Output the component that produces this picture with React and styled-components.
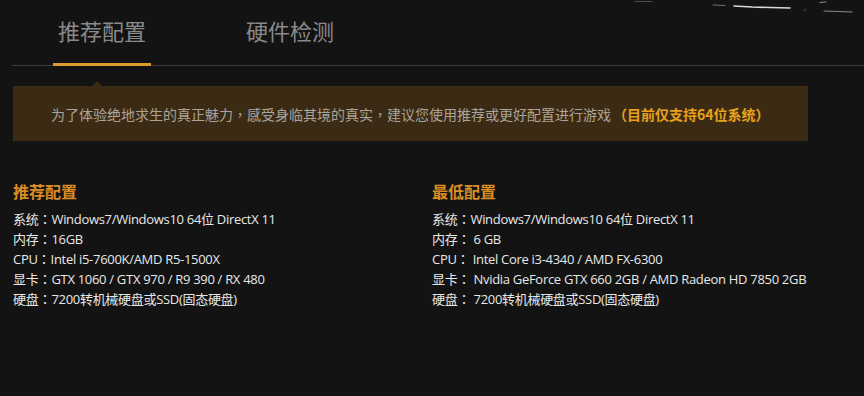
import React from "react";
import styled, { createGlobalStyle } from "styled-components";

const Global = createGlobalStyle`
  html, body { margin: 0; padding: 0; background: #131313; }
  body {
    font-family: "Open Sans", "Noto Sans CJK SC", sans-serif;
    width: 864px; height: 396px; overflow: hidden;
  }
`;

const Page = styled.div`
  position: relative;
  width: 864px;
  height: 396px;
  background: #131313;
  padding-left: 12px;
  box-sizing: border-box;
`;

const Scratch = styled.svg`
  position: absolute;
  top: 0;
  left: 600px;
  width: 264px;
  height: 16px;
  pointer-events: none;
`;

const TabBar = styled.div`
  display: flex;
  gap: 90px;
  height: 65px;
  padding-left: 41px;
  border-bottom: 1px solid #3a3a3a;
  align-items: flex-end;
`;

const Tab = styled.div`
  width: 98px;
  box-sizing: border-box;
  text-align: center;
  font-family: "Noto Sans CJK SC", sans-serif;
  font-size: 22px;
  line-height: 30px;
  color: #8a8a8a;
  padding-bottom: 18px;
  margin-bottom: -1px;
  border-bottom: 3px solid ${(p) => (p.$active ? "#e0992e" : "transparent")};
`;

const Notice = styled.div`
  position: relative;
  margin-top: 20px;
  margin-left: 1px;
  width: 795px;
  height: 55px;
  box-sizing: border-box;
  background: #3c2b14;
  display: flex;
  align-items: center;
  padding-left: 38px;
  font-family: "Noto Sans CJK TC", "Noto Sans CJK SC", sans-serif;
  font-size: 14px;
  color: #a9a49c;

  &::before {
    content: "";
    position: absolute;
    top: -5px;
    left: 79px;
    border-left: 5px solid transparent;
    border-right: 5px solid transparent;
    border-bottom: 5px solid #3c2b14;
  }
`;

const Highlight = styled.span`
  color: #e6a21d;
  font-weight: 700;
  margin-left: 2px;
`;

const Columns = styled.div`
  display: grid;
  grid-template-columns: 419px 1fr;
  margin-top: 39px;
  padding-left: 1px;
`;

const Column = styled.div`
  display: flex;
  flex-direction: column;
`;

const Heading = styled.div`
  font-family: "Noto Sans CJK SC", sans-serif;
  font-weight: 700;
  font-size: 16px;
  line-height: 22px;
  color: #d98d22;
  margin-bottom: 7px;
`;

const Line = styled.div`
  font-size: 13px;
  line-height: 20px;
  color: #e8e8e8;
  letter-spacing: -0.3px;
  white-space: pre;
`;

const Colon = styled.span`
  font-family: "Noto Sans CJK TC", sans-serif;
  letter-spacing: 0;
`;

const rec = [
  ["系统", "Windows7/Windows10 64位 DirectX 11"],
  ["内存", "16GB"],
  ["CPU", "Intel i5-7600K/AMD R5-1500X"],
  ["显卡", "GTX 1060 / GTX 970 / R9 390 / RX 480"],
  ["硬盘", "7200转机械硬盘或SSD(固态硬盘)"],
];

const min = [
  ["系统", "Windows7/Windows10 64位 DirectX 11"],
  ["内存", " 6 GB"],
  ["CPU", " Intel Core i3-4340 / AMD FX-6300"],
  ["显卡", " Nvidia GeForce GTX 660 2GB / AMD Radeon HD 7850 2GB"],
  ["硬盘", " 7200转机械硬盘或SSD(固态硬盘)"],
];

function Spec({ title, rows }) {
  return (
    <Column>
      <Heading>{title}</Heading>
      {rows.map(([k, v]) => (
        <Line key={k}>
          {k}
          <Colon>：</Colon>
          {v}
        </Line>
      ))}
    </Column>
  );
}

export default function App() {
  return (
    <Page>
      <Global />
      <Scratch viewBox="0 0 264 16">
        <g stroke="#fff" strokeLinecap="round" fill="none">
          <path d="M113 5 L125 5.5" strokeOpacity="0.4" strokeWidth="1" />
          <path d="M134 6 L152 7 L170 7.5 L190 8" strokeOpacity="0.85" strokeWidth="1.6" />
          <path d="M220 2.5 L226 2" strokeOpacity="0.5" strokeWidth="1" />
          <path d="M224 11 L252 12" strokeOpacity="0.5" strokeWidth="1" />
          <path d="M35 1.5 L52 1.5" strokeOpacity="0.25" strokeWidth="1" />
          <path d="M204 10 L206 10" strokeOpacity="0.25" strokeWidth="1" />
        </g>
      </Scratch>
      <TabBar>
        <Tab $active>推荐配置</Tab>
        <Tab>硬件检测</Tab>
      </TabBar>
      <Notice>
        为了体验绝地求生的真正魅力，感受身临其境的真实，建议您使用推荐或更好配置进行游戏
        <Highlight>（目前仅支持64位系统）</Highlight>
      </Notice>
      <Columns>
        <Spec title="推荐配置" rows={rec} />
        <Spec title="最低配置" rows={min} />
      </Columns>
    </Page>
  );
}
